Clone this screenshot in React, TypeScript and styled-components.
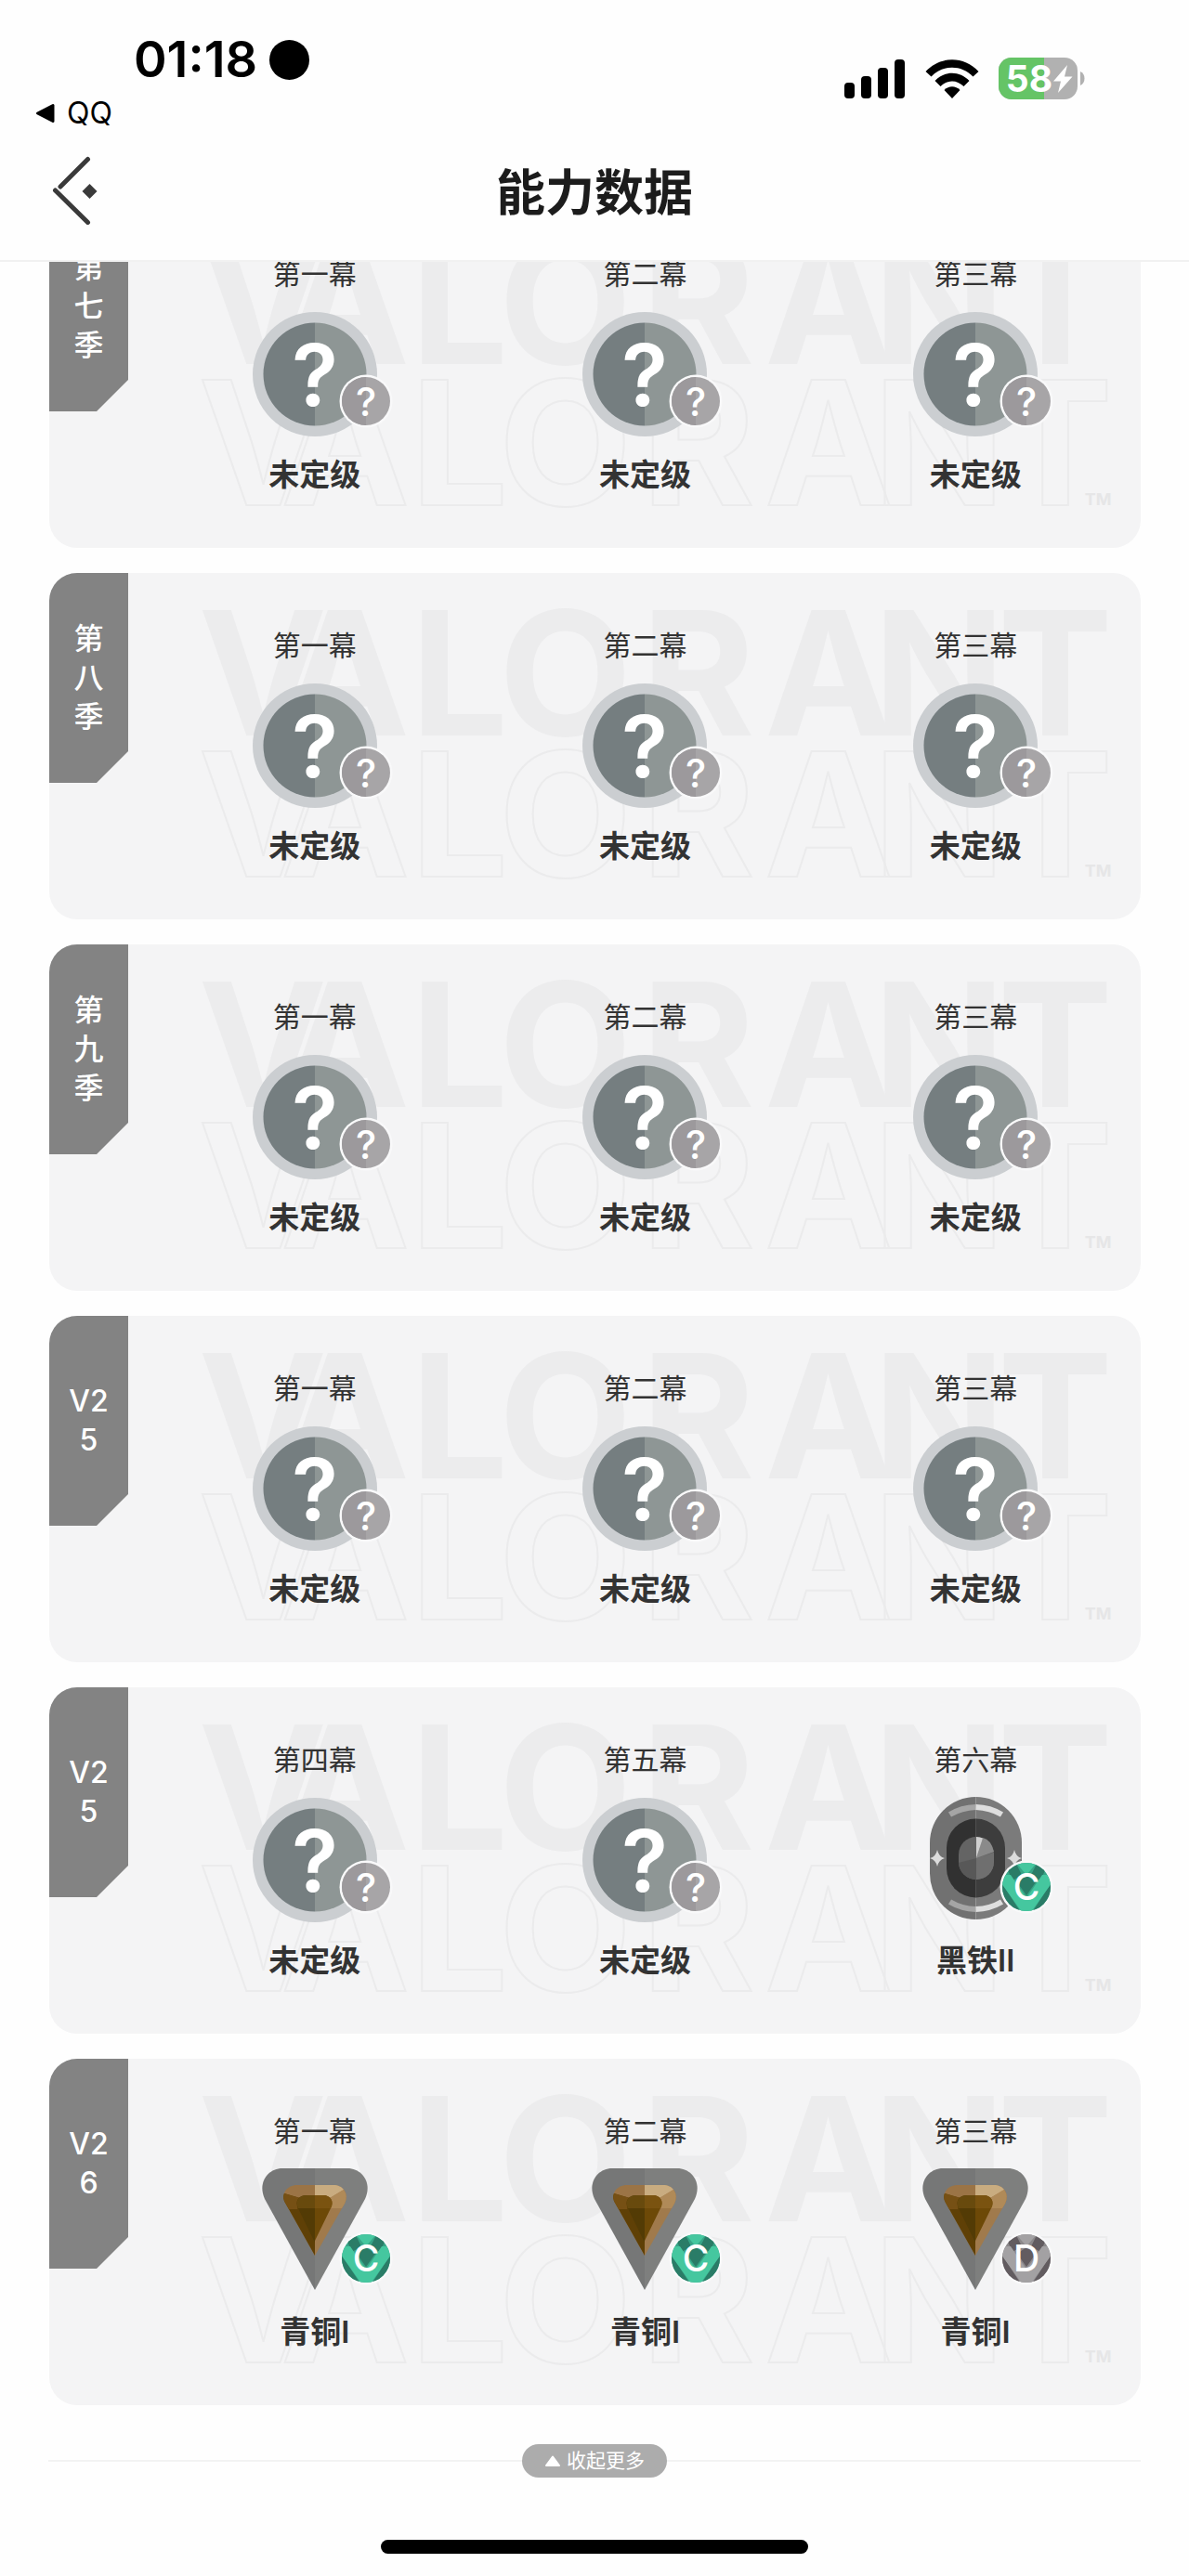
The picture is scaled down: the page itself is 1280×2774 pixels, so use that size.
import styled, { createGlobalStyle } from 'styled-components';

type Rank = 'unranked' | 'iron' | 'bronze';
type Grade = '?' | 'C' | 'D';

interface Act {
  title: string;
  rank: Rank;
  name: string;
  grade: Grade;
}

interface Season {
  id: string;
  label: string;
  acts: Act[];
}

const unranked = (title: string): Act => ({ title, rank: 'unranked', name: '未定级', grade: '?' });

const firstActs = ['第一幕', '第二幕', '第三幕'].map(unranked);

const seasons: Season[] = [
  { id: 's7', label: '第七季', acts: firstActs },
  { id: 's8', label: '第八季', acts: firstActs },
  { id: 's9', label: '第九季', acts: firstActs },
  { id: 'v25-1', label: 'V25', acts: firstActs },
  {
    id: 'v25-2',
    label: 'V25',
    acts: [
      unranked('第四幕'),
      unranked('第五幕'),
      { title: '第六幕', rank: 'iron', name: '黑铁II', grade: 'C' },
    ],
  },
  {
    id: 'v26-1',
    label: 'V26',
    acts: [
      { title: '第一幕', rank: 'bronze', name: '青铜I', grade: 'C' },
      { title: '第二幕', rank: 'bronze', name: '青铜I', grade: 'C' },
      { title: '第三幕', rank: 'bronze', name: '青铜I', grade: 'D' },
    ],
  },
];

const Status = () => (
  <StatusBar>
    <StatusLeft>
      <TimeRow>
        <Time>01:18</Time>
        <FocusDot />
      </TimeRow>
      <BackToApp href="#qq">
        <svg width="22" height="22" viewBox="0 0 22 22" aria-hidden="true">
          <path d="M19 2.5V19.5L2.5 11Z" stroke="#000" strokeWidth="3" strokeLinejoin="round" />
        </svg>
        QQ
      </BackToApp>
    </StatusLeft>
    <StatusRight>
      <svg width="66" height="42" viewBox="0 0 66 42" aria-hidden="true">
        <rect x="0" y="25" width="11" height="17" rx="4" />
        <rect x="18" y="18" width="11" height="24" rx="4" />
        <rect x="36" y="9" width="11" height="33" rx="4" />
        <rect x="54" y="0" width="11" height="42" rx="4" />
      </svg>
      <svg width="58" height="42" viewBox="0 0 58 42" aria-hidden="true">
        <path d="M0.5 13C16 -4 42 -4 57.5 13L51.5 18.500C39 5.500 19 5.500 6.500 18.500Z" />
        <path d="M10.500 23C21 12 37 12 47.500 23L41.500 29C34 21.500 24 21.500 16.500 29Z" />
        <path d="M20.500 33C25.500 28 32.500 28 37.500 33L29 42Z" />
      </svg>
      <svg width="93" height="46" viewBox="0 0 93 46" role="img" aria-label="58%">
        <clipPath id="battery">
          <rect width="85" height="45" rx="14" />
        </clipPath>
        <g clipPath="url(#battery)">
          <rect width="85" height="45" fill="#b1b1b1" />
          <rect width="49" height="45" fill="#65c466" />
        </g>
        <path d="M88 15C94 17 94 28 88 30Z" fill="#b1b1b1" />
        <text x="33" y="37" fill="#fff" fontSize="39" fontWeight="700" textAnchor="middle">
          58
        </text>
        <path d="M74 8L59 25.500H67L64 38L79.500 20.500H71Z" fill="#fff" />
      </svg>
    </StatusRight>
  </StatusBar>
);

const Unranked = () => (
  <svg width="136" height="136" viewBox="0 0 136 136" aria-hidden="true">
    <circle cx="68" cy="68" r="67" fill="#cbced1" />
    <path d="M68 12.500A55.500 55.500 0 0 0 68 123.500Z" fill="#757e80" />
    <path d="M68 12.500A55.500 55.500 0 0 1 68 123.500Z" fill="#8e9695" />
    <text x="68" y="102" fill="#fff" fontSize="92" fontWeight="600" textAnchor="middle">
      ?
    </text>
  </svg>
);

const Iron = () => (
  <svg width="99" height="136" viewBox="0 0 99 136" aria-hidden="true">
    <path d="M49.500 0A49.500 49.500 0 0 0 0 49.500V82.500A49.500 49.500 0 0 0 49.500 132Z" fill="#717171" />
    <path d="M49.500 0A49.500 49.500 0 0 1 99 49.500V82.500A49.500 49.500 0 0 1 49.500 132Z" fill="#7b7b7b" />
    <path d="M21.500 19Q34 11.500 49.500 11" fill="none" stroke="#a5a5a5" strokeWidth="6" />
    <path d="M49.500 11Q65 11.500 77.500 19" fill="none" stroke="#dedede" strokeWidth="6" />
    <path d="M21.500 113Q34 120.500 49.500 121" fill="none" stroke="#a5a5a5" strokeWidth="6" />
    <path d="M49.500 121Q65 120.500 77.500 113" fill="none" stroke="#dedede" strokeWidth="6" />
    <path d="M49.500 23.500A31.500 31.500 0 0 0 18 55V77A31.500 31.500 0 0 0 49.500 108.500Z" fill="#313131" />
    <path d="M49.500 23.500A31.500 31.500 0 0 1 81 55V77A31.500 31.500 0 0 1 49.500 108.500Z" fill="#3d3d3d" />
    <rect x="31" y="43" width="38" height="46" rx="19" fill="#646464" />
    <path d="M50 66L69 60V70A19 19 0 0 1 50 89Z" fill="#6f6f6f" />
    <path d="M50 66L31 71A19 19 0 0 0 50 89Z" fill="#585858" />
    <path d="M50 66L69 59Q66 46 57 44Z" fill="#8a8a8a" />
    <path d="M50 66V43Q54 43 57 44.500Z" fill="#cfcfcf" />
    <path d="M8 57Q9.500 64.500 16 66Q9.500 68 8 75Q6.500 68 0 66Q6.500 64.500 8 57Z" fill="#dcdcdc" />
    <path d="M91 57Q92.500 64.500 99 66Q92.500 68 91 75Q89.500 68 83 66Q89.500 64.500 91 57Z" fill="#dcdcdc" />
  </svg>
);

const Bronze = () => (
  <svg width="114" height="136" viewBox="0 0 114 136" aria-hidden="true">
    <path d="M57 0H22C6 0 -5 16 3 33L57 131Z" fill="#767777" />
    <path d="M57 0H92C108 0 119 16 111 33L57 131Z" fill="#7e7f7e" />
    <path d="M57 18H38C27 18 20 27 25 37L57 94Z" fill="#9b7446" />
    <path d="M57 18H77C88 18 94 28 89 38L57 94Z" fill="#a07a4c" />
    <path d="M57 18H77C82 18 86 20 88 23L73 32L57 29Z" fill="#c9ac80" />
    <path d="M88 23Q93 30 89 38L86 43H73V32Z" fill="#b08a58" />
    <path d="M24 27L41 32L57 60V94L25 37Q22 32 24 27Z" fill="#5f4006" />
    <path d="M24 27L41 32L38 44H29L25 37Q22 32 24 27Z" fill="#765014" />
    <path d="M57 29H48C40 29 35 35 39 43L57 80Z" fill="#533b05" />
    <path d="M57 29H66C74 29 78 36 74 43L57 78Z" fill="#6d4907" />
    <path d="M57 29H66C74 29 78 36 74 43H57Z" fill="#7a5310" />
    <path d="M57 29H48C40 29 35 35 39 43H57Z" fill="#684a0d" />
  </svg>
);

const emblems = { unranked: Unranked, iron: Iron, bronze: Bronze };

const gradeColors = {
  '?': { dark: '#9c999c', mid: '#a7a5a7', light: '#a7a5a7' },
  C: { dark: '#2a7c67', mid: '#36a486', light: '#45c79f' },
  D: { dark: '#625c60', mid: '#8b888a', light: '#a3a1a3' },
};

const GradeBadge = ({ grade }: { grade: Grade }) => {
  const { dark, mid, light } = gradeColors[grade];

  return (
    <Badge viewBox="0 0 58 58" role="img" aria-label={grade}>
      <clipPath id="badge">
        <circle cx="29" cy="29" r="26" />
      </clipPath>
      <circle cx="29" cy="29" r="28.5" fill="#f9f9fa" />
      <g clipPath="url(#badge)">
        <rect width="58" height="58" fill={mid} />
        {grade === '?' ? (
          <rect width="29" height="58" fill={dark} />
        ) : (
          <>
            <path d="M8 9L17 2L24 16L14 22ZM50 9L41 2L34 16L44 22Z" fill={dark} />
            <path d="M2 24L24 58H0ZM56 24L34 58H58Z" fill={dark} />
            <path d="M17 2H41L29 16Z" fill={light} />
            <path d="M2 16H12L29 41L46 16H56V25L34 56H24L2 25Z" fill={light} />
            <path d="M29 17L39 24L29 38L19 24Z" fill={dark} />
          </>
        )}
      </g>
      <text
        x="29"
        y={grade === '?' ? 45 : 43}
        fill="#fff"
        fontSize={grade === '?' ? 42 : 39}
        fontWeight="500"
        textAnchor="middle"
      >
        {grade}
      </text>
    </Badge>
  );
};

const letterX = '230 319 442 556 699 840 959 1084';

const Watermark = () => (
  <WatermarkArt viewBox="0 0 1176 373" aria-hidden="true">
    <text x={letterX} y="175" fill="#ececed">
      VALORANT
    </text>
    <text x={letterX} y="327" fill="none" stroke="#ebebec" strokeWidth="2">
      VALORANT
    </text>
    <text x="1130" y="327" fill="#e6e6e7" fontSize="18">
      TM
    </text>
  </WatermarkArt>
);

const SeasonCard = ({ season }: { season: Season }) => (
  <Card>
    <Watermark />
    <SeasonTab>
      <SeasonLabel>{season.label}</SeasonLabel>
    </SeasonTab>
    <Acts>
      {season.acts.map((act) => {
        const Emblem = emblems[act.rank];
        return (
          <ActItem key={act.title}>
            <ActTitle>{act.title}</ActTitle>
            <EmblemBox>
              <Emblem />
              <GradeBadge grade={act.grade} />
            </EmblemBox>
            <RankName>{act.name}</RankName>
          </ActItem>
        );
      })}
    </Acts>
  </Card>
);

const App = () => {
  return (
    <Page>
      <GlobalStyle />
      <Status />
      <NavBar>
        <BackButton type="button" aria-label="返回">
          <svg width="50" height="74" viewBox="0 0 50 74" aria-hidden="true">
            <path d="M38.500 3.500L9 33" stroke="#3a3a3a" strokeWidth="5" strokeLinecap="round" />
            <path d="M3.500 37L38.500 71.500" stroke="#3a3a3a" strokeWidth="5" strokeLinecap="round" />
            <path d="M40.500 30L48.500 38L40.500 46L32.500 38Z" fill="#3a3a3a" />
          </svg>
        </BackButton>
        <NavTitle>能力数据</NavTitle>
      </NavBar>
      <Scroller>
        <SeasonList>
          {seasons.map((season) => (
            <SeasonCard key={season.id} season={season} />
          ))}
        </SeasonList>
      </Scroller>
      <FoldRow>
        <FoldButton type="button">
          <svg width="18" height="14" viewBox="0 0 18 14" aria-hidden="true">
            <path d="M9 2.500L16 12H2Z" fill="#fff" stroke="#fff" strokeWidth="2" strokeLinejoin="round" />
          </svg>
          收起更多
        </FoldButton>
      </FoldRow>
      <HomeIndicator />
    </Page>
  );
};

const GlobalStyle = createGlobalStyle`
  * {
    box-sizing: border-box;
  }

  body {
    margin: 0;
    background: #fefefe;
    color: #333;
    font-family: Inter, 'Noto Sans CJK SC', sans-serif;
  }

  button {
    border: 0;
    font-family: inherit;
    cursor: pointer;
  }

  svg {
    display: block;
  }
`;

const Page = styled.div`
  padding-bottom: 24px;
`;

const StatusBar = styled.div`
  display: flex;
  justify-content: space-between;
  padding-right: 112px;
  color: #000;
`;

const StatusLeft = styled.div`
  display: flex;
  flex-direction: column;
  gap: 19px;
  padding: 39px 0 0 38px;
`;

const TimeRow = styled.div`
  display: flex;
  align-items: center;
  gap: 13px;
  height: 50px;
  padding-left: 106px;
`;

const Time = styled.span`
  font-size: 54px;
  font-weight: 600;
  line-height: 50px;
`;

const FocusDot = styled.i`
  width: 43px;
  height: 43px;
  border-radius: 50%;
  background: #000;
`;

const BackToApp = styled.a`
  display: flex;
  align-items: center;
  gap: 12px;
  color: inherit;
  font-size: 32px;
  line-height: 28px;
  text-decoration: none;
`;

const StatusRight = styled.div`
  display: flex;
  align-items: center;
  align-self: flex-start;
  gap: 21px;
  padding-top: 62px;
`;

const NavBar = styled.header`
  display: grid;
  grid-template-columns: 1fr auto 1fr;
  align-items: center;
  height: 146px;
  padding: 0 52px;
  border-bottom: 2px solid #f1f1f1;
`;

const BackButton = styled.button`
  justify-self: start;
  padding: 0 4px 6px;
  background: none;
`;

const NavTitle = styled.h1`
  margin: 0;
  color: #1c1c1c;
  font-size: 53px;
  font-weight: 600;
  line-height: 60px;
`;

const Scroller = styled.main`
  overflow: hidden;
`;

/* the list is scrolled part of the way past its first card */
const SeasonList = styled.div`
  display: flex;
  flex-direction: column;
  gap: 27px;
  margin-top: -65px;
  padding: 0 52px 0 53px;
`;

const Card = styled.section`
  display: grid;
  grid-template-columns: 108px 1fr;
  grid-template-rows: 373px;
  border-radius: 30px;
  background: #f4f4f5;
  overflow: hidden;
`;

const WatermarkArt = styled.svg`
  grid-area: 1 / 1 / 2 / 3;
  width: 100%;
  height: 100%;
  font-size: 186px;
  font-weight: 700;
  text-anchor: middle;
`;

const SeasonTab = styled.div`
  grid-area: 1 / 1;
  display: flex;
  align-items: center;
  justify-content: center;
  width: 85px;
  height: 226px;
  background: #838383;
  clip-path: polygon(0 0, 100% 0, 100% 192px, 51px 100%, 0 100%);
`;

const SeasonLabel = styled.h2`
  width: 50px;
  margin: 0;
  color: #fff;
  font-size: 32px;
  font-weight: 500;
  line-height: 42px;
  text-align: center;
  word-break: break-all;
`;

const Acts = styled.div`
  grid-area: 1 / 2;
  display: grid;
  grid-template-columns: repeat(3, 1fr);
  padding-top: 58px;
`;

const ActItem = styled.article`
  display: flex;
  flex-direction: column;
  align-items: center;
`;

const ActTitle = styled.h3`
  height: 40px;
  margin: 0;
  font-size: 30px;
  font-weight: 400;
  line-height: 40px;
`;

const EmblemBox = styled.div`
  position: relative;
  display: flex;
  justify-content: center;
  width: 136px;
  height: 136px;
  margin: 20px 0 18px;
`;

const Badge = styled.svg`
  position: absolute;
  right: -16px;
  bottom: 10px;
  width: 58px;
  height: 58px;
`;

const RankName = styled.p`
  margin: 0;
  font-size: 33px;
  font-weight: 600;
  line-height: 44px;
`;

const FoldRow = styled.div`
  display: flex;
  align-items: center;
  margin: 42px 52px 67px;

  &::before,
  &::after {
    content: '';
    flex: 1;
    height: 2px;
    background: #f3f3f3;
  }
`;

const FoldButton = styled.button`
  display: flex;
  align-items: center;
  gap: 6px;
  height: 36px;
  padding: 0 24px;
  border-radius: 18px;
  background: #acacac;
  color: #fff;
  font-size: 21px;
  line-height: 36px;
`;

const HomeIndicator = styled.div`
  width: 36%;
  height: 15px;
  margin: 0 auto;
  border-radius: 8px;
  background: #000;
`;

export default App;
